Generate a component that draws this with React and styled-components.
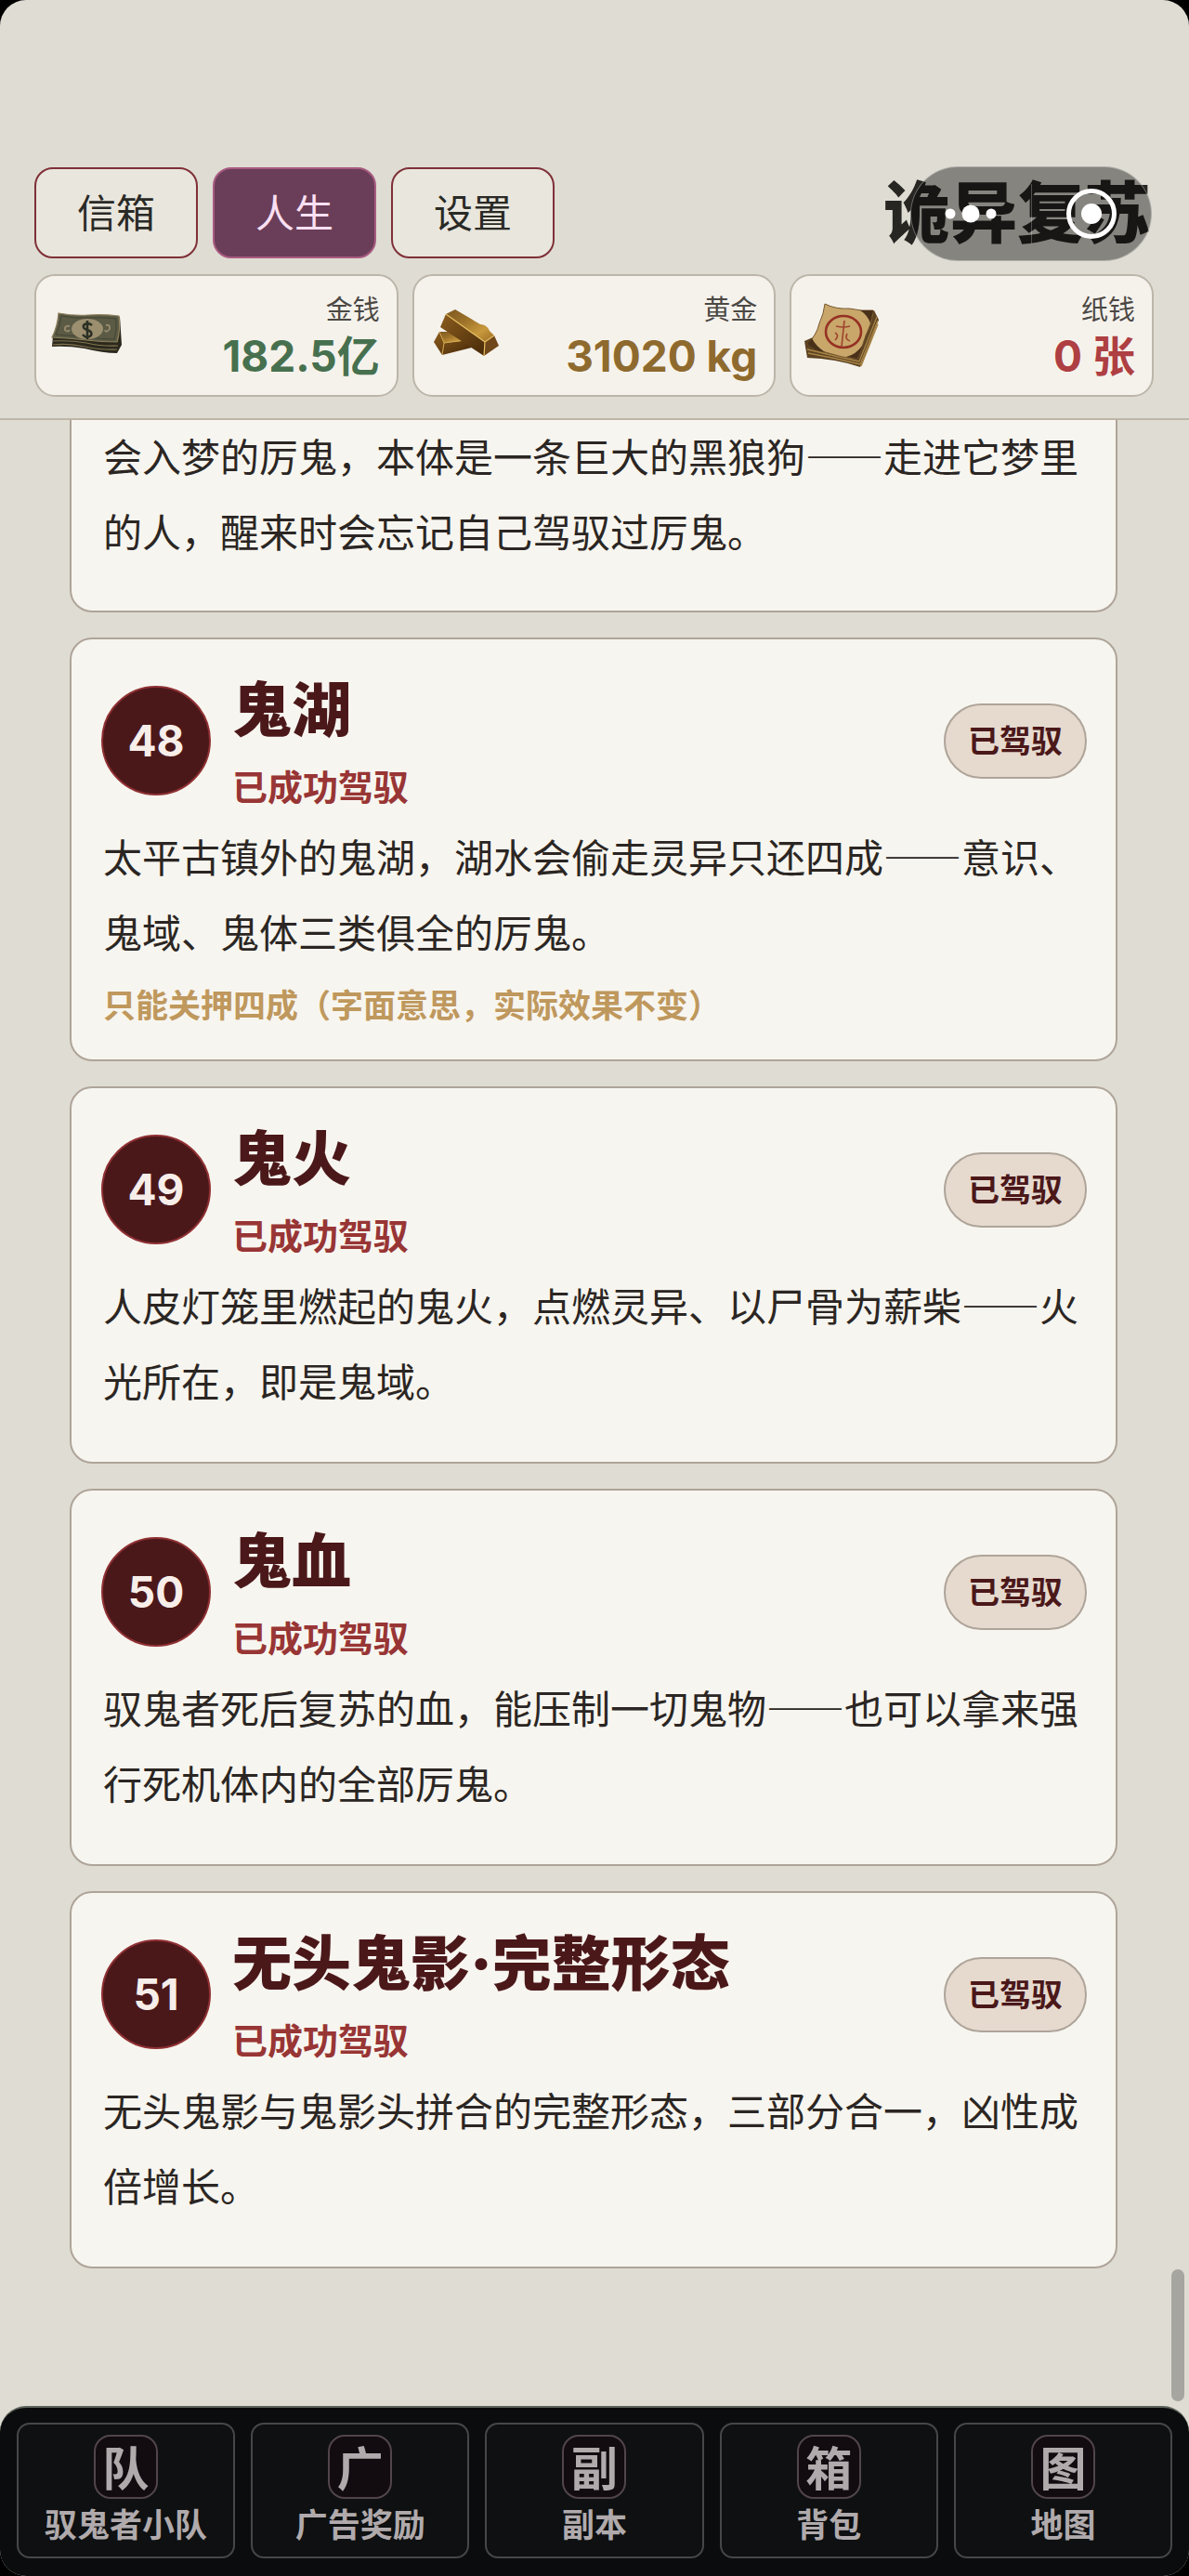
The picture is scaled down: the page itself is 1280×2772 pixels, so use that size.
import styled, { createGlobalStyle } from 'styled-components';

const tabs = ['信箱', '人生', '设置'];

const ghosts = [
  {
    no: 48,
    name: '鬼湖',
    desc: '太平古镇外的鬼湖，湖水会偷走灵异只还四成——意识、鬼域、鬼体三类俱全的厉鬼。',
    note: '只能关押四成（字面意思，实际效果不变）',
  },
  {
    no: 49,
    name: '鬼火',
    desc: '人皮灯笼里燃起的鬼火，点燃灵异、以尸骨为薪柴——火光所在，即是鬼域。',
  },
  {
    no: 50,
    name: '鬼血',
    desc: '驭鬼者死后复苏的血，能压制一切鬼物——也可以拿来强行死机体内的全部厉鬼。',
  },
  {
    no: 51,
    name: '无头鬼影·完整形态',
    desc: '无头鬼影与鬼影头拼合的完整形态，三部分合一，凶性成倍增长。',
  },
];

const navItems = [
  { icon: '队', label: '驭鬼者小队' },
  { icon: '广', label: '广告奖励' },
  { icon: '副', label: '副本' },
  { icon: '箱', label: '背包' },
  { icon: '图', label: '地图' },
];

const CashIcon = () => (
  <WalletIcon viewBox="0 0 84 84" aria-hidden="true">
    <path d="M4 42L3 54Q20 53 38 56Q58 61 73 61L78 52L76 22Z" fill="#2b291d" />
    <path d="M4 48Q22 47 40 50Q58 54 74 53M4 52Q20 50 38 54Q58 58 73 57" fill="none" stroke="#827550" strokeWidth="1.2" />
    <path d="M10 18Q26 21 42 20Q58 19 75 21Q77 36 73 49Q56 49 40 47Q22 45 3 44Q9 32 10 18Z" fill="#5a5a45" stroke="#90825c" strokeWidth="1.2" />
    <path d="M13 21Q28 24 43 23Q58 22 72 24Q73 36 70 46Q56 46 40 44Q24 42 7 41Q12 32 13 21Z" fill="none" stroke="#434432" strokeWidth="1" />
    <ellipse cx="41" cy="35" rx="17" ry="11" fill="#9c8f70" />
    <path d="M22 32Q16 31 17 36Q20 39 22 36M61 31Q66 30 65 35Q61 40 60 36" fill="none" stroke="#94886a" strokeWidth="2" />
    <path d="M46 31Q41 27 37 31Q36 35 41 36Q47 38 45 42Q40 46 36 41M41 26V46" fill="none" stroke="#2c3024" strokeWidth="2.6" />
  </WalletIcon>
);

const GoldIcon = () => (
  <WalletIcon viewBox="0 0 84 84" aria-hidden="true">
    <defs>
      <linearGradient id="goldTop" x1="0" y1="0" x2="1" y2="1">
        <stop offset="0" stopColor="#7d5820" />
        <stop offset="0.35" stopColor="#9a6f28" />
        <stop offset="0.7" stopColor="#c8993d" />
        <stop offset="1" stopColor="#9a6b22" />
      </linearGradient>
      <linearGradient id="goldSide" x1="0" y1="0" x2="1" y2="1">
        <stop offset="0" stopColor="#8b5d1e" />
        <stop offset="1" stopColor="#472908" />
      </linearGradient>
    </defs>
    <path d="M13 38L30 38L48 55L16 63L7 49Z" fill="url(#goldSide)" />
    <path d="M13 38L32 38L45 47L18 50Z" fill="url(#goldTop)" />
    <path d="M18 50L16 63M18 50L42 47M13 38L18 50" fill="none" stroke="#d7ad55" strokeWidth="1" />
    <path d="M20 19L14 33L61 64L62 49Z" fill="url(#goldSide)" />
    <path d="M20 19L30 14L57 30Q64 30 67 37L72 42L62 49Z" fill="url(#goldTop)" />
    <path d="M62 49L72 42L77 53L61 64Z" fill="#70471a" />
    <path d="M20 19L62 49L72 42M62 49L61 64" fill="none" stroke="#e5bd61" strokeWidth="1.2" />
  </WalletIcon>
);

const PaperIcon = () => (
  <WalletIcon viewBox="0 0 84 84" aria-hidden="true">
    <path d="M75 15L80 25L70 52L60 76Q34 67 3 66L0 48Z" fill="#5c4323" />
    <path d="M78 22L59 70Q32 64 3 57M79 26L60 73Q32 66 4 61M79 30L61 75" fill="none" stroke="#a98546" strokeWidth="1.3" />
    <path d="M22 8Q34 14 48 13Q62 16 74 15Q73 29 66 42Q62 55 57 67Q40 66 26 61Q14 59 3 51Q13 42 16 29Q21 18 22 8Z" fill="#c9a66a" stroke="#76572c" strokeWidth="1" />
    <path d="M60 15L74 15L71 29Q68 20 60 15ZM3 51L8 45Q12 53 22 60Q10 58 3 51ZM57 67L63 52Q55 63 45 65Z" fill="#493019" />
    <ellipse cx="42" cy="38" rx="19" ry="17" fill="none" stroke="#953123" strokeWidth="2.6" />
    <path d="M43 26L40 54M34 32Q42 34 49 32M33 39Q38 42 33 47M46 40Q43 46 49 48" fill="none" stroke="#a04730" strokeWidth="1.7" />
  </WalletIcon>
);

const wallets = [
  { label: '金钱', value: '182.5亿', color: '#47704f', Icon: CashIcon },
  { label: '黄金', value: '31020 kg', color: '#8f6a2e', Icon: GoldIcon },
  { label: '纸钱', value: '0 张', color: '#ae3f42', Icon: PaperIcon },
];

const GhostCard = ({ no, name, desc, note }) => (
  <Card>
    <CardHead>
      <Number>{no}</Number>
      <Names>
        <Name>{name}</Name>
        <Status>已成功驾驭</Status>
      </Names>
      <Badge>已驾驭</Badge>
    </CardHead>
    <Desc>{desc}</Desc>
    {note && <Note>{note}</Note>}
  </Card>
);

const App = () => {
  return (
    <>
      <GlobalStyle />
      <Screen lang="zh-CN">
        <Header>
          <TopRow>
            <Tabs>
              {tabs.map((tab) => (
                <Tab key={tab} type="button" $active={tab === '人生'}>{tab}</Tab>
              ))}
            </Tabs>
            <Title>诡异复苏</Title>
          </TopRow>
          <Wallets>
            {wallets.map(({ label, value, color, Icon }) => (
              <Wallet key={label}>
                <Icon />
                <WalletText>
                  <WalletLabel>{label}</WalletLabel>
                  <WalletValue $color={color}>{value}</WalletValue>
                </WalletText>
              </Wallet>
            ))}
          </Wallets>
          <Capsule>
            <CapsuleButton type="button" aria-label="更多">
              <svg width="56" height="20" viewBox="0 0 56 20" fill="#fff">
                <circle cx="6" cy="10" r="5.5" />
                <circle cx="28" cy="10" r="9.5" />
                <circle cx="50" cy="10" r="5.5" />
              </svg>
            </CapsuleButton>
            <CapsuleLine />
            <CapsuleButton type="button" aria-label="关闭">
              <svg width="56" height="56" viewBox="0 0 56 56">
                <circle cx="28" cy="28" r="24.5" fill="none" stroke="#fff" strokeWidth="5" />
                <circle cx="28" cy="28" r="11" fill="#fff" />
              </svg>
            </CapsuleButton>
          </Capsule>
        </Header>
        <Main>
          <Card $continued>
            <Desc>会入梦的厉鬼，本体是一条巨大的黑狼狗——走进它梦里的人，醒来时会忘记自己驾驭过厉鬼。</Desc>
          </Card>
          {ghosts.map((ghost) => (
            <GhostCard key={ghost.no} {...ghost} />
          ))}
          <ScrollThumb />
        </Main>
        <Nav>
          {navItems.map(({ icon, label }) => (
            <NavButton key={label} type="button">
              <NavIcon>{icon}</NavIcon>
              <NavLabel>{label}</NavLabel>
            </NavButton>
          ))}
        </Nav>
      </Screen>
    </>
  );
}

const GlobalStyle = createGlobalStyle`
  * {
    box-sizing: border-box;
  }

  body {
    margin: 0;
    background: #000;
    color: #2b2623;
    font-family: "Noto Sans CJK SC", sans-serif;
  }

  button {
    margin: 0;
    font-family: inherit;
    cursor: pointer;
  }

  h1, h2, p {
    margin: 0;
  }
`;

const Screen = styled.div`
  display: flex;
  flex-direction: column;
  min-height: 100vh;
  border-radius: 28px;
  overflow: hidden;
  background: #dfdcd3;
`;

const Header = styled.header`
  position: relative;
  display: flex;
  flex-direction: column;
  gap: 17px;
  padding: 180px 38px 23px 37px;
  border-bottom: 2px solid #bdb6a8;
`;

const TopRow = styled.div`
  display: flex;
  align-items: flex-start;
  justify-content: space-between;
  height: 98px;
`;

const Tabs = styled.nav`
  display: flex;
  gap: 16px;
`;

const Tab = styled.button`
  width: 176px;
  height: 98px;
  padding: 0 0 4px;
  border: 2px solid ${({ $active }) => ($active ? '#a85a80' : '#7f3038')};
  border-radius: 20px;
  background: ${({ $active }) => ($active ? '#6a3e58' : '#e9e6dd')};
  color: ${({ $active }) => ($active ? '#fbe0f3' : '#2a2a26')};
  font-size: 42px;
  line-height: 60px;
`;

const Title = styled.h1`
  padding-right: 3px;
  color: #272622;
  font-size: 72px;
  font-weight: 900;
  line-height: 88px;
`;

const Wallets = styled.div`
  display: grid;
  grid-template-columns: repeat(3, 1fr);
  gap: 15px;
`;

const Wallet = styled.div`
  display: flex;
  align-items: center;
  justify-content: space-between;
  height: 132px;
  padding: 0 18px 0 14px;
  border: 2px solid #bcb6aa;
  border-radius: 22px;
  background: #f5f2ec;
`;

const WalletIcon = styled.svg`
  flex: none;
  width: 84px;
  height: 84px;
`;

const WalletText = styled.div`
  display: flex;
  flex-direction: column;
  gap: 3px;
  text-align: right;
`;

const WalletLabel = styled.div`
  color: #4c4844;
  font-size: 29px;
  line-height: 40px;
`;

const WalletValue = styled.div`
  color: ${({ $color }) => $color};
  font-family: Inter, "Noto Sans CJK SC", sans-serif;
  font-size: 46px;
  font-weight: 700;
  line-height: 58px;
  white-space: nowrap;
`;

const Capsule = styled.div`
  position: absolute;
  top: 179px;
  right: 40px;
  display: flex;
  align-items: center;
  width: 260px;
  height: 102px;
  border: 1px solid rgba(255, 255, 255, .35);
  border-radius: 51px;
  background: rgba(0, 0, 0, .4);
`;

const CapsuleButton = styled.button`
  display: flex;
  flex: 1;
  align-items: center;
  justify-content: center;
  height: 100%;
  padding: 0;
  border: 0;
  background: none;
`;

const CapsuleLine = styled.span`
  width: 1px;
  height: 64px;
  background: rgba(255, 255, 255, .25);
`;

const Main = styled.main`
  position: relative;
  display: flex;
  flex: 1;
  flex-direction: column;
  gap: 27px;
  padding: 0 77px 148px 75px;
`;

const Desc = styled.p`
  padding-left: 2px;
  font-size: 42px;
  font-variant-east-asian: full-width;
  line-height: 81px;
`;

const Card = styled.article`
  display: flex;
  flex-direction: column;
  padding: ${({ $continued }) => ($continued ? '0 31px 46px 32px' : '32px 31px 35px 32px')};
  border: 2px solid #aea499;
  border-top-width: ${({ $continued }) => ($continued ? '0' : '2px')};
  border-radius: ${({ $continued }) => ($continued ? '0 0 24px 24px' : '24px')};
  background: #f7f5ef;

  ${Desc}:first-child {
    margin-top: -3px;
  }

  ${Desc}:nth-child(2) {
    margin-bottom: 13px;
  }
`;

const CardHead = styled.div`
  display: flex;
  align-items: center;
  gap: 23px;
  margin-bottom: 6px;
`;

const Number = styled.span`
  display: flex;
  flex: none;
  align-items: center;
  justify-content: center;
  width: 118px;
  height: 118px;
  border: 2px solid #8f3033;
  border-radius: 50%;
  background: #4b181a;
  color: #f7eeea;
  font-family: Inter, sans-serif;
  font-size: 46px;
  font-weight: 700;
`;

const Names = styled.div`
  display: flex;
  flex: 1;
  flex-direction: column;
  gap: 10px;
  padding-bottom: 2px;
`;

const Name = styled.h2`
  color: #4b181a;
  font-family: Inter, "Noto Sans CJK SC", sans-serif;
  font-size: 64px;
  font-weight: 900;
  line-height: 88px;
`;

const Status = styled.div`
  color: #983535;
  font-size: 38px;
  font-weight: 700;
  line-height: 54px;
`;

const Badge = styled.span`
  flex: none;
  padding: 12px 24px 16px;
  border: 2px solid #aea499;
  border-radius: 41px;
  background: #e6dacf;
  color: #4b181a;
  font-size: 34px;
  font-weight: 700;
  line-height: 49px;
`;

const Note = styled.p`
  padding-left: 2px;
  color: #bf985d;
  font-size: 35px;
  font-weight: 700;
  line-height: 50px;
`;

const ScrollThumb = styled.span`
  position: absolute;
  right: 5px;
  bottom: 5px;
  width: 14px;
  height: 142px;
  border-radius: 7px;
  background: #a6a5a0;
`;

const Nav = styled.nav`
  display: grid;
  grid-template-columns: repeat(5, 1fr);
  gap: 17px;
  padding: 16px 18px 19px;
  border-top: 2px solid #5d645c;
  border-radius: 28px 28px 0 0;
  background: #0a0c0e;
`;

const NavButton = styled.button`
  display: flex;
  flex-direction: column;
  align-items: center;
  gap: 5px;
  height: 146px;
  padding: 11px 0 0;
  border: 2px solid #454749;
  border-radius: 14px;
  background: #0e1011;
  color: #b0aaac;
  font-weight: 700;
`;

const NavIcon = styled.span`
  display: flex;
  align-items: center;
  justify-content: center;
  width: 69px;
  height: 69px;
  padding-bottom: 4px;
  border: 2px solid #51454a;
  border-radius: 18px;
  background: #120b0f;
  font-size: 50px;
  line-height: 60px;
`;

const NavLabel = styled.span`
  font-size: 35px;
  line-height: 42px;
`;

export default App;
